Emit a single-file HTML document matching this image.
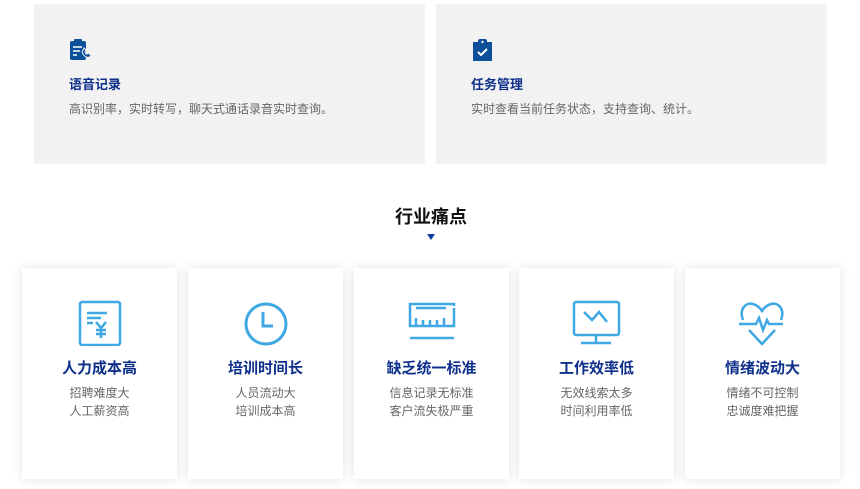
<!DOCTYPE html>
<html><head><meta charset="utf-8"><style>
*{margin:0;padding:0;box-sizing:border-box}
body{width:860px;height:489px;background:#fff;font-family:"Liberation Sans","Noto Sans CJK SC",sans-serif;position:relative;overflow:hidden}
.top{position:absolute;top:4px;height:160px;width:391px;background:#f2f2f2}
.top svg{position:absolute;left:35px;top:34px}
.top h3{position:absolute;left:35px;top:70px;font-size:13px;color:#0e2f8a;font-weight:bold}
.top p{position:absolute;left:35px;top:96px;font-size:12px;color:#666}
h2{position:absolute;left:0;width:862px;top:203px;text-align:center;font-size:18px;color:#111}
.tri{position:absolute;left:427px;top:234px;width:0;height:0;border-left:4px solid transparent;border-right:4px solid transparent;border-top:6px solid #0e3f9c}
.card{position:absolute;top:268px;height:211px;width:155px;background:#fff;box-shadow:0 0 10px rgba(0,0,0,.12);text-align:center}
.card svg{position:absolute;left:55px;top:32px}
.card h4{position:absolute;top:89px;width:100%;font-size:15px;color:#0e2f8a;font-weight:bold}
.card p{position:absolute;top:116px;width:100%;font-size:12px;color:#666;line-height:18px}
</style></head><body>
<div class="top" style="left:34px">
<svg width="24" height="24" viewBox="0 0 24 24"><rect x="1" y="3" width="16" height="19" rx="2" fill="#0e4f9a"/><rect x="5" y="1" width="8" height="4" rx="1" fill="#0e4f9a"/><path d="M4 9h9M4 13h7M4 17h4" stroke="#fff" stroke-width="1.6"/><path d="M13 14c2 5 6 7 9 4l-2-3-2 1c-1 0-2-1-2-2l1-2-2-2z" fill="#0e4f9a" stroke="#f2f2f2" stroke-width="1"/></svg>
<h3>语音记录</h3><p>高识别率，实时转写，聊天式通话录音实时查询。</p></div>
<div class="top" style="left:436px">
<svg width="24" height="24" viewBox="0 0 24 24"><rect x="2" y="4" width="19" height="19" fill="#0e4f9a"/><rect x="7" y="1" width="9" height="5" rx="2" fill="#0e4f9a"/><circle cx="11.5" cy="4" r="1.2" fill="#f2f2f2"/><path d="M7 14l3 3 6-6" stroke="#fff" stroke-width="2" fill="none"/></svg>
<h3>任务管理</h3><p>实时查看当前任务状态，支持查询、统计。</p></div>
<h2>行业痛点</h2><div class="tri"></div>
<div class="card" style="left:22px"><svg width="46" height="46" viewBox="0 0 46 46" fill="none" stroke="#3fa7e4" stroke-width="2.5"><rect x="3" y="2" width="40" height="43" rx="2"/><path d="M10 13h20M10 18h14M10 23h6M19 22l5 6 5-6M24 28v10M19 30h10M19 34h10"/></svg><h4>人力成本高</h4><p>招聘难度大<br>人工薪资高</p></div>
<div class="card" style="left:188px"><svg width="46" height="46" viewBox="0 0 46 46" fill="none" stroke="#3fa7e4" stroke-width="3"><circle cx="23" cy="24" r="20"/><path d="M20 12v14h10"/></svg><h4>培训时间长</h4><p>人员流动大<br>培训成本高</p></div>
<div class="card" style="left:354px"><svg width="50" height="46" viewBox="0 0 50 46" fill="none" stroke="#3fa7e4" stroke-width="2.5" style="left:52px"><path d="M48 6V4H4v22h44V8M10 8h30M10 26v-8M17 26v-6M24 26v-6M31 26v-6M38 26v-8M4 38h44"/></svg><h4>缺乏统一标准</h4><p>信息记录无标准<br>客户流失极严重</p></div>
<div class="card" style="left:519px"><svg width="50" height="46" viewBox="0 0 50 46" fill="none" stroke="#3fa7e4" stroke-width="2.5" style="left:52px"><rect x="3" y="2" width="45" height="33" rx="2"/><path d="M25 35v7M10 43h30M13 12l8 8 7-8 8 10"/></svg><h4>工作效率低</h4><p>无效线索太多<br>时间利用率低</p></div>
<div class="card" style="left:685px"><svg width="50" height="46" viewBox="0 0 50 46" fill="none" stroke="#3fa7e4" stroke-width="2.5" style="left:52px"><path d="M6 20C2 10 8 2 16 4c4 1 7 4 9 7 2-3 5-6 9-7 8-2 14 6 10 16M2 24h17l3-6 4 12 4-10 2 4h14M12 30l13 14 13-14"/></svg><h4>情绪波动大</h4><p>情绪不可控制<br>忠诚度难把握</p></div>
</body></html>
